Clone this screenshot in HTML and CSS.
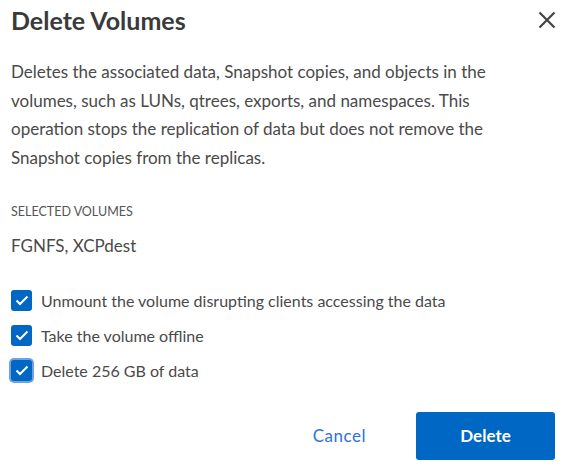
FILE: index.html
```html
<!DOCTYPE html>
<html>
<head>
<meta charset="utf-8">
<link rel="stylesheet" href="styles.css">
</head>
<body>
<div class="dialog">
  <div class="header">
    <h1 class="title">Delete Volumes</h1>
    <button class="close" aria-label="Close">
      <svg width="18" height="18" viewBox="0 0 18 18"><path d="M1.5 1.5 L16.5 16.5 M16.5 1.5 L1.5 16.5" stroke="#444" stroke-width="2.2" fill="none"/></svg>
    </button>
  </div>
  <p class="desc">Deletes the associated data, Snapshot copies, and objects in the volumes, such as LUNs, qtrees, exports, and namespaces. This operation stops the replication of data but does not remove the Snapshot copies from the replicas.</p>
  <div class="label">SELECTED VOLUMES</div>
  <div class="value">FGNFS, XCPdest</div>
  <div class="checks">
    <label class="check"><span class="box"><svg width="14" height="11" viewBox="0 0 14 11"><path d="M1.5 5.5 L5 9 L12.5 1.5" stroke="#fff" stroke-width="2" fill="none"/></svg></span><span>Unmount the volume disrupting clients accessing the data</span></label>
    <label class="check"><span class="box"><svg width="14" height="11" viewBox="0 0 14 11"><path d="M1.5 5.5 L5 9 L12.5 1.5" stroke="#fff" stroke-width="2" fill="none"/></svg></span><span>Take the volume offline</span></label>
    <label class="check"><span class="box focus"><svg width="14" height="11" viewBox="0 0 14 11"><path d="M1.5 5.5 L5 9 L12.5 1.5" stroke="#fff" stroke-width="2" fill="none"/></svg></span><span>Delete 256 GB of data</span></label>
  </div>
  <div class="footer">
    <button class="cancel">Cancel</button>
    <button class="delete">Delete</button>
  </div>
</div>
</body>
</html>
```
FILE: styles.css
```css
html, body {
  margin: 0;
  padding: 0;
  background: #fff;
}
.dialog {
  width: 577px;
  height: 471px;
  box-sizing: border-box;
  padding: 4px 22px 0 11px;
  font-family: "Lato", "Liberation Sans", sans-serif;
  color: #4a4a4a;
}
.header {
  display: flex;
  justify-content: space-between;
  align-items: center;
  height: 32px;
}
.title {
  margin: 0;
  font-size: 25px;
  font-weight: 700;
  color: #3a3a3a;
}
.close {
  border: 0;
  background: none;
  padding: 0;
  margin-right: -1px;
  width: 18px;
  height: 18px;
  display: flex;
}
.desc {
  margin: 22px 0 0;
  font-size: 17px;
  line-height: 28.7px;
  width: 480px;
}
.label {
  margin-top: 31px;
  font-size: 12.5px;
  color: #555;
}
.value {
  margin-top: 16px;
  font-size: 17px;
}
.checks {
  margin-top: 34px;
  display: flex;
  flex-direction: column;
  gap: 14px;
}
.check {
  display: flex;
  align-items: center;
  gap: 9px;
  font-size: 16px;
  height: 21px;
}
.box {
  width: 21px;
  height: 21px;
  border-radius: 3px;
  background: #0067c5;
  display: flex;
  align-items: center;
  justify-content: center;
  flex: none;
}
.box.focus {
  box-shadow: 0 0 0 2px #6fa2e0;
}
.footer {
  margin-top: 31px;
  display: flex;
  justify-content: flex-end;
  align-items: center;
  gap: 50px;
}
.cancel {
  border: 0;
  background: none;
  font-family: inherit;
  font-size: 17px;
  color: #2f72dc;
  padding: 0;
  letter-spacing: 0.5px;
}
.delete {
  width: 139px;
  height: 48px;
  border: 0;
  border-radius: 3px;
  background: #0067c5;
  color: #fff;
  font-family: inherit;
  font-size: 17px;
  font-weight: 700;
}
```
